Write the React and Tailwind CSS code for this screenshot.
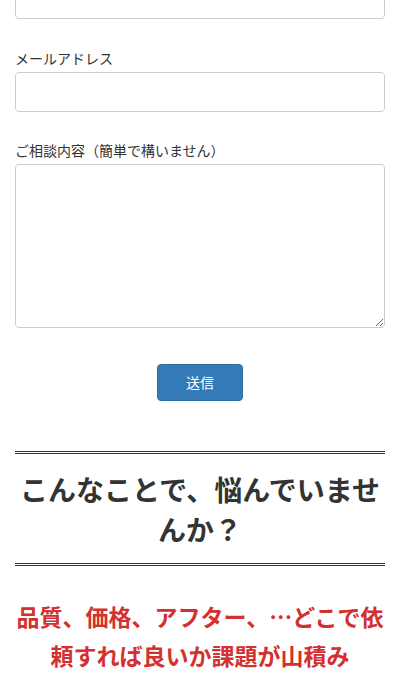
export default function App() {
  const font = { fontFamily: '"Noto Sans CJK JP", "Noto Sans", sans-serif' };
  return (
    <div className="w-[400px] h-[698px] overflow-hidden bg-white text-[#333]" style={font}>
      <div className="px-[15px]">
        <div className="mt-[-21px] h-[40px] w-full rounded-[4px] border border-[#ccc] bg-white" />
        <div className="mt-[29px] text-[14px] leading-[20px]">メールアドレス</div>
        <input className="mt-[4px] block h-[40px] w-full rounded-[4px] border border-[#ccc] bg-white px-3 outline-none" />
        <div className="mt-[28px] text-[14px] leading-[20px]">ご相談内容（簡単で構いません）</div>
        <textarea className="mt-[4px] block h-[164px] w-full resize-y rounded-[4px] border border-[#ccc] bg-white px-3 outline-none" />
        <div className="mt-[36px] flex justify-center">
          <button className="h-[37px] w-[86px] rounded-[4px] border border-[#2e6da4] bg-[#337ab7] text-[14px] text-white">
            送信
          </button>
        </div>
        <div className="mt-[50px] border-t-[3px] border-double border-[#333]" />
        <h2 className="pt-[15px] pb-[14px] text-center text-[28px] font-bold leading-[40px] text-[#333]">
          こんなことで、悩んでいませんか？
        </h2>
        <div className="border-t-[3px] border-double border-[#333]" />
        <p className="mt-[31px] text-center text-[23px] font-bold leading-[39px] text-[#d3302f]">
          品質、価格、アフター、…どこで依頼すれば良いか課題が山積み
        </p>
      </div>
    </div>
  );
}
